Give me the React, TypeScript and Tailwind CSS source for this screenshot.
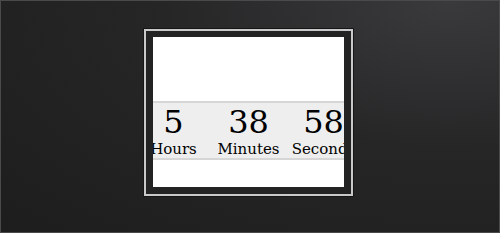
const UNITS = [
  { value: '5', label: 'Hours' },
  { value: '38', label: 'Minutes' },
  { value: '58', label: 'Seconds' },
]

export default function App() {
  return (
    <div className="w-[500px] h-[233px] border border-[#4a4a4a] bg-[radial-gradient(ellipse_at_90%_0%,#3a3a3c_0%,#262627_45%,#1d1d1e_100%)] pt-[28px]">
      <div className="mx-auto ml-[143px] w-[209px] border-2 border-[#c9c9c9] bg-[#232323] p-[7px] pt-[6px] shadow-[0_0_0_1px_#161616]">
        <div className="h-[150px] w-[191px] overflow-hidden bg-white pt-[64px]">
          <div className="flex h-[59px] w-[225px] -ml-[17px] border-y-2 border-[#d6d6d6] bg-[#eeeeee] font-['DejaVu_Serif',serif] text-black">
            {UNITS.map((u) => (
              <div key={u.label} className="flex w-[75px] flex-none flex-col items-center">
                <span className="text-[32px] leading-[36px] mt-[1px]">{u.value}</span>
                <span className="text-[15px] leading-[18px] whitespace-nowrap">{u.label}</span>
              </div>
            ))}
          </div>
        </div>
      </div>
    </div>
  )
}
